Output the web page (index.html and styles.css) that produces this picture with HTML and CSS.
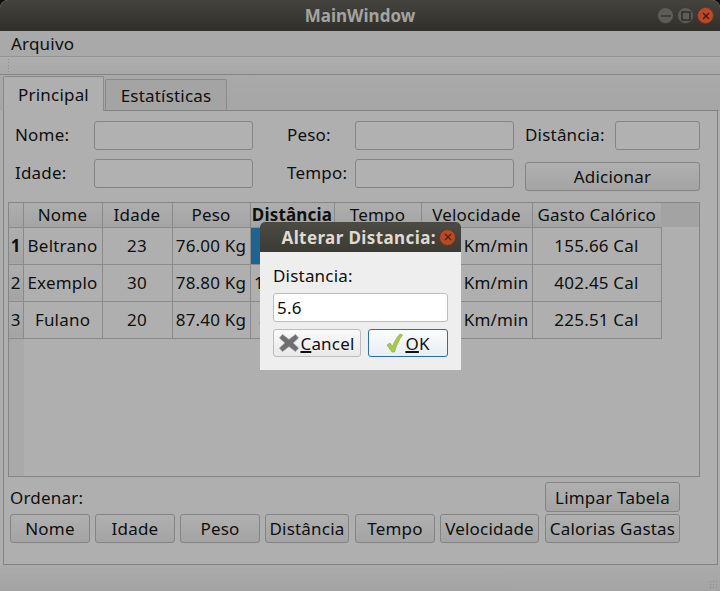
FILE: index.html
```html
<!DOCTYPE html>
<html lang="pt">
<head>
  <meta charset="UTF-8" />
  <title>MainWindow</title>
  <link rel="stylesheet" href="styles.css">
</head>
<body>

  <div class="window">
    <header class="titlebar">
      <span></span>
      <span class="title">MainWindow</span>
      <div class="wm-buttons">
        <span class="wm-btn"><svg width="12" height="12" viewBox="0 0 12 12"><path d="M1 6h10" stroke="#222" stroke-width="1.2"/></svg></span>
        <span class="wm-btn"><svg width="12" height="12" viewBox="0 0 12 12"><rect x="2" y="2" width="8" height="8" fill="none" stroke="#222" stroke-width="1.2"/></svg></span>
        <span class="wm-btn close"><svg width="12" height="12" viewBox="0 0 12 12"><path d="M3 3l6 6M9 3l-6 6" stroke="#4a1a08" stroke-width="1.4"/></svg></span>
      </div>
    </header>

    <nav class="menubar"><a href="#">Arquivo</a></nav>
    <div class="toolbar"><span class="grip"></span></div>

    <div class="tabs">
      <a class="tab active" href="#">Principal</a>
      <a class="tab" href="#">Estatísticas</a>
    </div>

    <main class="pane">
      <form class="entry">
        <label>Nome:</label>
        <input type="text" />
        <label class="gap-l">Peso:</label>
        <input type="text" />
        <label class="gap-s">Distância:</label>
        <input type="text" />
        <label>Idade:</label>
        <input type="text" />
        <label class="gap-l">Tempo:</label>
        <input type="text" />
        <button type="button" class="btn add">Adicionar</button>
      </form>

      <div class="table-wrap">
        <table class="data">
          <colgroup>
            <col class="c-head"><col class="c-nome"><col class="c-idade"><col class="c-peso"><col class="c-dist"><col class="c-tempo"><col class="c-vel"><col class="c-gasto"><col>
          </colgroup>
          <thead>
            <tr>
              <th></th><th>Nome</th><th>Idade</th><th>Peso</th><th class="current">Distância</th><th>Tempo</th><th>Velocidade</th><th class="last">Gasto Calórico</th><th class="filler"></th>
            </tr>
          </thead>
          <tbody>
            <tr>
              <th class="current">1</th><td>Beltrano</td><td>23</td><td>76.00 Kg</td><td class="selected">5.60 Km</td><td>35.00 min</td><td>0.16 Km/min</td><td>155.66 Cal</td><td class="filler"></td>
            </tr>
            <tr>
              <th>2</th><td>Exemplo</td><td>30</td><td>78.80 Kg</td><td>15.00 Km</td><td>90.00 min</td><td>0.17 Km/min</td><td>402.45 Cal</td><td class="filler"></td>
            </tr>
            <tr>
              <th>3</th><td>Fulano</td><td>20</td><td>87.40 Kg</td><td>8.00 Km</td><td>40.00 min</td><td>0.20 Km/min</td><td>225.51 Cal</td><td class="filler"></td>
            </tr>
          </tbody>
        </table>
      </div>

      <div class="sort-top">
        <span>Ordenar:</span>
        <button type="button" class="btn clear">Limpar Tabela</button>
      </div>
      <div class="sort-row">
        <button type="button" class="btn s80">Nome</button>
        <button type="button" class="btn s80">Idade</button>
        <button type="button" class="btn s80">Peso</button>
        <button type="button" class="btn s-dist">Distância</button>
        <button type="button" class="btn s80 s-tempo">Tempo</button>
        <button type="button" class="btn s-vel">Velocidade</button>
        <button type="button" class="btn s-cal">Calorias Gastas</button>
      </div>
    </main>

    <div class="statusbar"><span class="resize"></span></div>
  </div>

  <div class="dialog">
    <div class="dialog-title">
      <span>Alterar Distancia:</span>
      <span class="wm-btn close"><svg width="12" height="12" viewBox="0 0 12 12"><path d="M3 3l6 6M9 3l-6 6" stroke="#5a1e08" stroke-width="1.3"/></svg></span>
    </div>
    <div class="dialog-body">
      <label>Distancia:</label>
      <input type="text" value="5.6" />
      <div class="dialog-actions">
        <button type="button" class="dlg-btn">
          <svg width="20" height="20" viewBox="0 0 20 20"><path d="M3.500 1.500L10 6.500l6.500-5 3 3.500L14 10l5.500 5-3 3.500-6.500-5-6.500 5-3-3.500L6 10 .5 5z" fill="#6f6f6f" stroke="#959595" stroke-width=".8"/></svg>
          <span><u>C</u>ancel</span>
        </button>
        <button type="button" class="dlg-btn ok">
          <svg width="17" height="20" viewBox="0 0 17 20"><path d="M1 12l3-2 2.500 3.500C8.500 8.500 11 4 14 1l2.500 1C13 6.500 10.500 12 8.500 19H6z" fill="#a8c94a" stroke="#8fae3c" stroke-width=".7"/></svg>
          <span><u>O</u>K</span>
        </button>
      </div>
    </div>
  </div>

</body>
</html>
```

FILE: styles.css
```css
* {
  box-sizing: border-box;
}
html, body {
  margin: 0;
  padding: 0;
  height: 591px;
  overflow: hidden;
  background: #0c0c0a;
}
body {
  font-family: 'Noto Sans', sans-serif;
  font-size: 17px;
  letter-spacing: 0.2px;
  color: #0f0f0f;
  position: relative;
}
.window {
  height: 591px;
  display: flex;
  flex-direction: column;
  background: #afafaf;
  border-radius: 8px 8px 0 0;
  overflow: hidden;
}

/* title bar */
.titlebar {
  height: 31px;
  flex: none;
  display: grid;
  grid-template-columns: 1fr auto 1fr;
  align-items: center;
  background: linear-gradient(#45433e, #302f2a);
}
.title {
  font-weight: bold;
  letter-spacing: 0;
  color: #a3a3a0;
}
.wm-buttons {
  display: flex;
  justify-content: flex-end;
  gap: 3px;
  padding-right: 6px;
}
.wm-btn {
  width: 17px;
  height: 17px;
  border-radius: 50%;
  background: #5d5c57;
  border: 1px solid #3b3a36;
  display: flex;
  align-items: center;
  justify-content: center;
}
.wm-btn.close {
  background: #b8492a;
  border-color: #6e3320;
}

/* menu and toolbar */
.menubar {
  height: 26px;
  flex: none;
  padding: 0 11px;
  display: flex;
  align-items: center;
  background: #a9a9a9;
  border-bottom: 1px solid #949494;
}
.menubar a {
  color: #0f0f0f;
  text-decoration: none;
}
.toolbar {
  height: 18px;
  flex: none;
  padding: 1px 7px;
  background: linear-gradient(#aeaeae, #a8a8a8);
  border-bottom: 1px solid #868686;
}
.grip {
  display: block;
  width: 4px;
  height: 15px;
  background-image: radial-gradient(#8c8c8c 1px, transparent 1px);
  background-size: 3px 3px;
}

/* tabs */
.tabs {
  height: 36px;
  flex: none;
  display: flex;
  align-items: flex-end;
  padding-left: 3px;
  background: linear-gradient(#a9a9a9, #a6a6a6);
  margin-bottom: -1px;
}
.tab {
  height: 32px;
  width: 122px;
  margin-left: 1px;
  display: flex;
  align-items: center;
  justify-content: center;
  color: #0f0f0f;
  text-decoration: none;
  background: #a4a4a4;
  border: 1px solid #8a8a8a;
  border-bottom-color: #828282;
  border-radius: 2px 2px 0 0;
}
.tab.active {
  width: 101px;
  height: 35px;
  margin-left: 0;
  background: #afafaf;
  border-bottom: 0;
  position: relative;
  z-index: 1;
}

/* main pane */
.pane {
  height: 455px;
  flex: none;
  margin: 0 2px 0 3px;
  padding: 10px 17px 0 0;
  background: #afafaf;
  border: 1px solid #828282;
}
.entry {
  display: grid;
  grid-template-columns: 79px 159px 102px 159px 101px 85px;
  grid-template-rows: 29px 29px;
  row-gap: 9px;
  margin-left: 11px;
}
.entry label {
  display: flex;
  align-items: center;
  padding-bottom: 2px;
}
.entry label.gap-l {
  padding-left: 34px;
}
.entry label.gap-s {
  padding-left: 11px;
}
.entry input {
  width: 100%;
  height: 29px;
  background: #b1b1b1;
  border: 1px solid #848484;
  border-radius: 3px;
}
.btn {
  height: 29px;
  padding: 0;
  font: inherit;
  letter-spacing: inherit;
  color: #0f0f0f;
  background: linear-gradient(#b0b0b0, #a4a4a4);
  border: 1px solid #848484;
  border-radius: 3px;
}
.btn.add {
  grid-column: span 2;
  margin: 3px 0 0 11px;
}

/* table */
.table-wrap {
  height: 275px;
  margin-top: 14px;
  margin-left: 4px;
  border: 1px solid #858585;
  background: linear-gradient(to right, #a9a9a9 15px, #afafaf 15px);
}
.data {
  width: 100%;
  table-layout: fixed;
  border-collapse: collapse;
  text-align: center;
}
.c-head { width: 14px; }
.c-nome { width: 79px; }
.c-idade { width: 70px; }
.c-peso { width: 78px; }
.c-dist { width: 84px; }
.c-tempo { width: 87px; }
.c-vel { width: 111px; }
.c-gasto { width: 129px; }
.data th,
.data td {
  padding: 0;
  font-weight: normal;
  white-space: nowrap;
  border: 1px solid #8a8a8a;
}
.data thead th {
  height: 24px;
  background: linear-gradient(#aeaeae, #a4a4a4);
  border-top: 0;
}
.data thead th:first-child,
.data tbody th {
  border-left: 0;
}
.data tbody tr {
  height: 37px;
}
.data tbody th {
  background: linear-gradient(#aeaeae, #a4a4a4);
}
.data th.current {
  font-weight: bold;
}
.data td.selected {
  background: #1f6392;
  color: #dcdcdc;
}
.data thead th.last {
  border-right: 0;
}
.data thead th.filler {
  border: 0;
  background: #a3a3a3;
}
.data td.filler {
  border: 0;
  border-left: 1px solid #8a8a8a;
}

/* sort buttons */
.sort-top {
  display: flex;
  justify-content: space-between;
  align-items: center;
  height: 30px;
  margin: 5px 20px 0 6px;
}
.btn.clear {
  width: 135px;
  height: 30px;
}
.sort-row {
  display: flex;
  gap: 5px;
  margin: 2px 0 0 6px;
}
.s80 { width: 80px; }
.s-dist { width: 84px; }
.s-tempo { margin-left: 1px; }
.s-vel { width: 99px; }
.s-cal { width: 135px; margin-left: 1px; }

/* bottom strip */
.statusbar {
  flex: 1;
  position: relative;
  background: linear-gradient(#acacac, #a3a3a3);
}
.resize {
  position: absolute;
  right: 1px;
  bottom: 1px;
  width: 10px;
  height: 10px;
  background-image: radial-gradient(#8c8c8c 1px, transparent 1px);
  background-size: 3px 3px;
}

/* dialog over the window */
.dialog {
  position: absolute;
  left: 260px;
  top: 222px;
  width: 201px;
  height: 148px;
  background: #eeeeee;
  border-radius: 5px 5px 0 0;
  overflow: hidden;
}
.dialog-title {
  height: 30px;
  display: flex;
  align-items: center;
  justify-content: flex-end;
  gap: 3px;
  padding-right: 5px;
  background: linear-gradient(#4b4a43, #3b3a34);
  color: #dfdbd2;
  font-weight: bold;
  letter-spacing: 0.4px;
}
.dialog-body {
  padding: 13px 13px 0;
  letter-spacing: 0.2px;
}
.dialog-body label {
  display: block;
  height: 28px;
  line-height: 22px;
}
.dialog-body input {
  display: block;
  width: 175px;
  height: 29px;
  padding: 0 3px;
  font: inherit;
  letter-spacing: inherit;
  color: #111;
  background: white;
  border: 1px solid #bdbdbd;
  border-radius: 3px;
}
.dialog-actions {
  display: flex;
  gap: 7px;
  margin-top: 7px;
}
.dlg-btn {
  width: 88px;
  height: 28px;
  padding: 0;
  display: flex;
  align-items: center;
  justify-content: center;
  gap: 1px;
  font: inherit;
  letter-spacing: inherit;
  color: #111;
  background: linear-gradient(#fafafa, #e9e9e9);
  border: 1px solid #bcbcbc;
  border-radius: 3px;
}
.dlg-btn.ok {
  width: 80px;
  gap: 2px;
  background: linear-gradient(#fbfcfd, #e6eef5);
  border-color: #2f6f9f;
}
.dlg-btn u {
  text-decoration-thickness: 2px;
}
```
